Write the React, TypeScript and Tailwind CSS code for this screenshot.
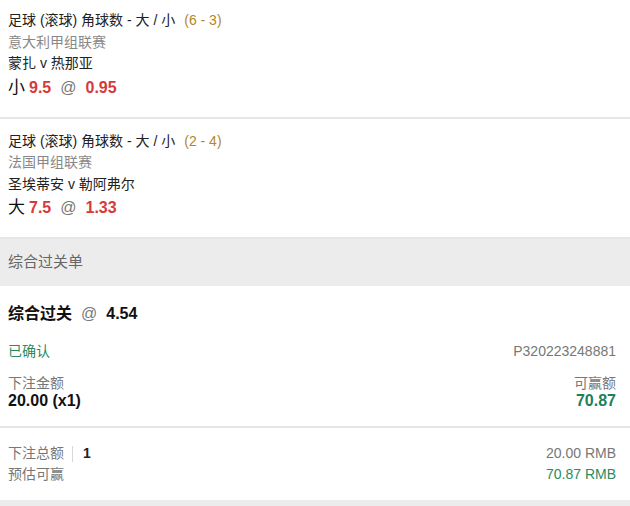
const font = { fontFamily: '"Liberation Sans", Arial, "Noto Sans CJK SC", sans-serif' };

type Leg = {
  score: string;
  league: string;
  match: string;
  pick: string;
  line: string;
  odds: string;
  top: string;
};

const legs: Leg[] = [
  { score: "(6 - 3)", league: "意大利甲组联赛", match: "蒙扎 v 热那亚", pick: "小", line: "9.5", odds: "0.95", top: "pt-[10px]" },
  { score: "(2 - 4)", league: "法国甲组联赛", match: "圣埃蒂安 v 勒阿弗尔", pick: "大", line: "7.5", odds: "1.33", top: "pt-[12px]" },
];

function LegRow({ leg }: { leg: Leg }) {
  return (
    <div className={`${leg.top} pb-[16px] pl-2 pr-[14px] border-b-2 border-[#e6e6e6]`}>
      <div className="text-[14px] leading-[21.5px] text-[#222]">
        足球 (滚球) 角球数 - 大 / 小
        <span className="ml-[9px] text-[#b3862a]">{leg.score}</span>
      </div>
      <div className="text-[14px] leading-[21.5px] text-[#888]">{leg.league}</div>
      <div className="text-[14px] leading-[21.5px] text-[#222]">{leg.match}</div>
      <div className="flex items-baseline text-[16px] leading-[26px]">
        <span className="text-[17px] text-[#111]">{leg.pick}</span>
        <span className="ml-[4px] font-bold text-[#d63a3a]">{leg.line}</span>
        <span className="ml-[9px] text-[#777]">@</span>
        <span className="ml-[9px] font-bold text-[#d63a3a]">{leg.odds}</span>
      </div>
    </div>
  );
}

export default function App() {
  return (
    <div className="w-[630px] h-[506px] overflow-hidden bg-white" style={font}>
      {legs.map((leg) => (
        <LegRow key={leg.match} leg={leg} />
      ))}

      <div className="h-[47px] flex items-center pl-2 bg-[#ececec] text-[15px] text-[#666]">
        综合过关单
      </div>

      {/* 过关详情 */}
      <div className="pt-[16px] pb-[17px] pl-2 pr-[14px] border-b-2 border-[#e6e6e6]">
        <div className="flex items-baseline text-[16px] leading-[24px]">
          <span className="font-bold text-[#111]">综合过关</span>
          <span className="ml-[9px] text-[#777]">@</span>
          <span className="ml-[9px] font-bold text-[#111]">4.54</span>
        </div>
        <div className="mt-[14.5px] flex justify-between text-[14px] leading-[21px]">
          <span className="text-[#2a8a62]">已确认</span>
          <span className="text-[#777]">P320223248881</span>
        </div>
        <div className="mt-[11px] flex justify-between">
          <div>
            <div className="text-[14px] leading-[20px] text-[#777]">下注金额</div>
            <div className="text-[16px] leading-[16px] font-bold text-[#111]">20.00 (x1)</div>
          </div>
          <div className="text-right">
            <div className="text-[14px] leading-[20px] text-[#777]">可赢额</div>
            <div className="text-[16px] leading-[16px] font-bold text-[#1d7f5b]">70.87</div>
          </div>
        </div>
      </div>

      <div className="pt-[15.5px] pb-[14.5px] pl-2 pr-[14px] flex justify-between text-[14px] leading-[21px]">
        <div>
          <div className="flex items-center text-[#777]">
            下注总额
            <span className="ml-[8px] mr-[10px] h-[16px] w-px bg-[#d8d8d8]" />
            <span className="text-[14px] font-bold text-[#222]">1</span>
          </div>
          <div className="text-[#777]">预估可赢</div>
        </div>
        <div className="text-right">
          <div className="text-[#777]">20.00 RMB</div>
          <div className="text-[#2a8a62]">70.87 RMB</div>
        </div>
      </div>

      <div className="h-[20px] bg-[#ececec]" />
    </div>
  );
}
